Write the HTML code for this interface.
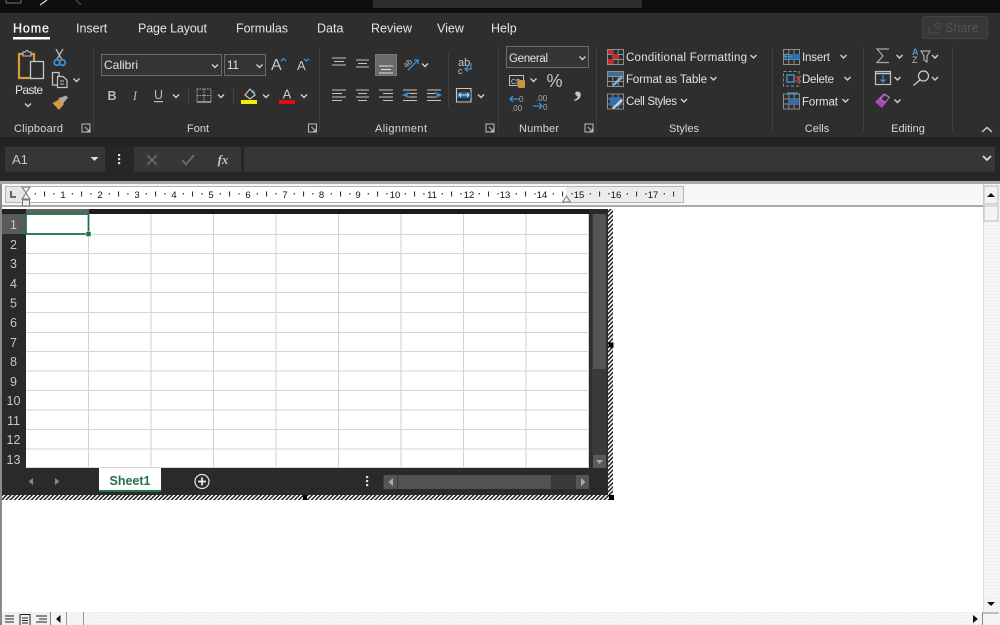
<!DOCTYPE html>
<html><head><meta charset="utf-8"><title>Excel</title>
<style>
html,body{margin:0;padding:0;width:1000px;height:625px;overflow:hidden;background:#fff}
svg{display:block;font-family:"Liberation Sans",sans-serif;filter:blur(.35px)}
.t{fill:#e2e2e2;font-size:11.500px}
.l{fill:#d8d8d8;font-size:11px;text-anchor:middle}
.tab{fill:#e4e4e4;font-size:12.500px}
.rn{fill:#c8c8c8;font-size:12.500px;text-anchor:middle}
.rl{fill:#111;font-size:9.500px;text-anchor:middle}
.g{stroke:#c4c4c4;stroke-width:1.300;fill:none}
.b{stroke:#3d8fd0;stroke-width:1.300;fill:none}
.c{stroke:#c4c4c4;stroke-width:1.100;fill:none}
.d{stroke:#3d3d3d;stroke-width:1}
</style></head><body>
<svg width="1000" height="625" viewBox="0 0 1000 625" xmlns="http://www.w3.org/2000/svg">
<defs>
<pattern id="h" width="3" height="3" patternUnits="userSpaceOnUse" patternTransform="rotate(45)"><rect width="3" height="3" fill="#fff"/><rect width="1.500" height="3" fill="#222"/></pattern>
<pattern id="rt" x="26" y="186" width="37" height="17" patternUnits="userSpaceOnUse"><rect x="8.700" y="7" width="1.200" height="1.500" fill="#333"/><rect x="18" y="5.500" width="1.100" height="5" fill="#333"/><rect x="27.300" y="7" width="1.200" height="1.500" fill="#333"/></pattern>
<pattern id="di" width="3" height="3" patternUnits="userSpaceOnUse"><rect width="3" height="3" fill="#f6f6f6"/><rect width="1" height="1" fill="#e6e6e6"/></pattern>
<g id="cv"><path d="M-3 -1.500L0 1.500L3 -1.500" fill="none" stroke="#d0d0d0" stroke-width="1.400"/></g>
<g id="lc"><path d="M-4 -4H4V4H-4Z M-1 -1L3.500 3.500M3.500 0.500V3.500H0.500" fill="none" stroke="#bdbdbd" stroke-width="1"/></g>
<g id="grid"><path d="M0 0H16V15H0ZM0 5H16M0 10H16M5.300 0V15M10.600 0V15" fill="none" stroke="#8f8f8f" stroke-width="1"/></g>
</defs>

<!-- title bar -->
<rect width="1000" height="13" fill="#0e0e0e"/>
<rect x="373" y="0" width="269" height="8" fill="#2e2e2e"/>
<path d="M6 3V0M21 3V0M6 3H21" stroke="#777" fill="none"/>
<path d="M40 5L47 0" stroke="#ddd" stroke-width="1.200"/>
<path d="M76 0L81 5" stroke="#555" stroke-width="1.200"/>

<!-- ribbon -->
<rect y="13" width="1000" height="124" fill="#2e2e2e"/>
<rect y="137" width="1000" height="44" fill="#262626"/>
<rect y="137" width="1000" height="9" fill="#232323"/>

<!-- tabs -->
<text x="13" y="32.500" class="tab" textLength="36" style="fill:#f6f6f6;stroke:#f6f6f6;stroke-width:.3">Home</text>
<rect x="13" y="37" width="37" height="2.500" fill="#fff"/>
<text x="76" y="32.500" class="tab">Insert</text>
<text x="138" y="32.500" class="tab" textLength="69">Page Layout</text>
<text x="236" y="32.500" class="tab" textLength="52">Formulas</text>
<text x="317" y="32.500" class="tab">Data</text>
<text x="371" y="32.500" class="tab">Review</text>
<text x="437" y="32.500" class="tab">View</text>
<text x="491" y="32.500" class="tab">Help</text>
<rect x="922.500" y="16.500" width="65" height="22" rx="2" fill="#383838" stroke="#444"/>
<path d="M934 25L938 22V24H942V27H938V29Z M929 27V33H941" fill="none" stroke="#4c4c4c"/>
<text x="945" y="32" style="font-size:12.500px;fill:#535353">Share</text>

<!-- dividers -->
<g class="d">
<path d="M93.500 48V132M319.500 48V132M498.500 46V132M596.500 46V132M772.500 48V132M863.500 46V132M952.500 46V132M448.500 52V108"/>
<path d="M188.500 88V104M233.500 88V104" stroke="#444"/>
</g>

<!-- clipboard -->
<path d="M19 54H34V78H19Z" fill="none" stroke="#d89a3c" stroke-width="2.200"/>
<path d="M23 56V52H25.500Q27 48.500 28.500 52H31V56Z" fill="#2e2e2e" stroke="#c4c4c4"/>
<rect x="30.500" y="61.500" width="13" height="17" fill="#2e2e2e" stroke="#c8c8c8" stroke-width="1.300"/>
<text x="15" y="94" class="t" textLength="28" style="font-size:12px">Paste</text>
<use href="#cv" x="28" y="105"/>
<path d="M56 49L61.500 59M63 49L57 59" stroke="#b5b5b5" stroke-width="1.300"/>
<circle cx="57" cy="62.500" r="2.800" fill="none" stroke="#3d8fd0" stroke-width="1.800"/>
<circle cx="62.500" cy="62.500" r="2.800" fill="none" stroke="#3d8fd0" stroke-width="1.800"/>
<path d="M52.500 72.500H59V85H52.500Z" class="g"/>
<path d="M57.500 76.500H63L67 80V87.500H57.500Z" fill="#2e2e2e" stroke="#c4c4c4" stroke-width="1.200"/>
<path d="M60 81H64M60 84H64" stroke="#c4c4c4"/>
<use href="#cv" x="76.500" y="80"/>
<path d="M52.500 103L60 99L64 104L59 110Z" fill="#d89a3c"/>
<path d="M58 98.500L66 95.500L68 97.500L63 103.500Z" fill="#a8a8a8"/>

<!-- font -->
<rect x="101.500" y="54.500" width="120" height="21" fill="#343434" stroke="#6a6a6a"/>
<text x="104" y="69" class="t" style="font-size:12px" textLength="34">Calibri</text>
<use href="#cv" x="215" y="66"/>
<rect x="224.500" y="54.500" width="41" height="21" fill="#343434" stroke="#6a6a6a"/>
<text x="227" y="69" class="t">11</text>
<use href="#cv" x="259.500" y="66"/>
<text x="271" y="70" style="font-size:16px;fill:#c8c8c8">A</text>
<path d="M281 61L283.500 58.500L286 61" class="b"/>
<text x="297" y="70" style="font-size:13px;fill:#c8c8c8">A</text>
<path d="M304 59L306.500 61L309 59" class="b"/>
<text x="112" y="100" text-anchor="middle" style="font-size:12.500px;font-weight:bold;fill:#b8b8b8">B</text>
<text x="135" y="100" text-anchor="middle" style="font-size:12.500px;font-style:italic;font-family:'Liberation Serif',serif;fill:#b8b8b8">I</text>
<text x="158.500" y="99" text-anchor="middle" style="font-size:12.500px;fill:#b8b8b8">U</text>
<rect x="154" y="101" width="9" height="1.200" fill="#b8b8b8"/>
<use href="#cv" x="176" y="96"/>
<path d="M197 89H211V102H197ZM204 89V102M197 95.500H211" fill="none" stroke="#a8a8a8" stroke-dasharray="1.500 1"/>
<path d="M197 102H211" stroke="#bbb" stroke-width="1.300"/>
<use href="#cv" x="221" y="96"/>
<path d="M245 95L250 89L255 95L250 99Z" fill="none" stroke="#c4c4c4" stroke-width="1.200"/>
<path d="M253 90L255 94" stroke="#3d8fd0" stroke-width="1.500"/>
<rect x="241" y="100" width="16" height="4" fill="#f2ec00"/>
<use href="#cv" x="266" y="96"/>
<text x="287" y="98.500" text-anchor="middle" style="font-size:13px;fill:#c8c8c8">A</text>
<rect x="279" y="100" width="16" height="4" fill="#e00b14"/>
<use href="#cv" x="304" y="96"/>

<!-- alignment -->
<rect x="375.500" y="54.500" width="21" height="21" fill="#6a6a6a" stroke="#7a7a7a"/>
<g class="c">
<path d="M332 58H346M334 61.500H344M332 65H346"/>
<path d="M356 60H369M358 63.500H367M356 67H369"/>
<path d="M379 66H393M381 69.500H391M379 73H393" stroke="#e0e0e0"/>
<path d="M332 90H346M332 93.500H342M332 97H346M332 100.500H342"/>
<path d="M356 90H369M358 93.500H367M356 97H369M358 100.500H367"/>
<path d="M379 90H393M383 93.500H393M379 97H393M383 100.500H393"/>
<path d="M403 90H417M409 93.500H417M409 97H417M403 100.500H417"/>
<path d="M427 90H441M427 93.500H435M427 97H435M427 100.500H441"/>
</g>
<path d="M409 97L403.500 94.500L409 92M404 94.500H408" class="b" transform="translate(0,.5)"/>
<path d="M435 97L440.500 94.500L435 92M436 94.500H440" class="b" transform="translate(0,.5)"/>
<text x="403" y="66" style="font-size:8px;fill:#bbb" transform="rotate(-35 407 63)">ab</text>
<path d="M408 70L418 60M414 60H418V64" class="b"/>
<use href="#cv" x="425" y="65"/>
<text x="458" y="66" style="font-size:11px;fill:#c4c4c4">ab</text>
<text x="458" y="74" style="font-size:9px;fill:#c4c4c4">c</text>
<path d="M471 63V69H465M468 66.500L465 69L468 71.500" class="b"/>
<path d="M456.500 88.500H471V102H456.500Z" class="c"/>
<path d="M457 92H471V98H457Z" fill="#27608f"/>
<path d="M459 95H469M461 93L459 95L461 97M467 93L469 95L467 97" fill="none" stroke="#dde" stroke-width="1"/>
<use href="#cv" x="481" y="96"/>

<!-- number -->
<rect x="506.500" y="46.500" width="82" height="21" fill="#343434" stroke="#6a6a6a"/>
<text x="509" y="62" class="t" textLength="39">General</text>
<use href="#cv" x="582.500" y="58"/>
<rect x="509.500" y="75.500" width="14" height="10" fill="none" stroke="#c0c0c0"/>
<text x="511" y="84" style="font-size:7px;fill:#ccc">C$</text>
<rect x="518" y="80" width="7" height="8" rx="1" fill="#c9973f"/>
<use href="#cv" x="533.500" y="80"/>
<text x="554.500" y="87" text-anchor="middle" style="font-size:18px;fill:#c4c4c4">%</text>
<text x="578" y="96" text-anchor="middle" style="font-size:32px;font-weight:bold;fill:#c8c8c8;font-family:'Liberation Serif',serif">,</text>
<path d="M519 99H510M513 96L510 99L513 102" class="b"/>
<text x="519" y="102" style="font-size:8px;fill:#aaa">0</text>
<text x="511" y="111" style="font-size:8px;fill:#aaa">.00</text>
<text x="536" y="101" style="font-size:8px;fill:#aaa">.00</text>
<path d="M533 106H542M539 103L542 106L539 109" class="b"/>
<text x="543" y="110" style="font-size:8px;fill:#aaa">0</text>

<!-- styles -->
<use href="#grid" x="607.500" y="49.500"/>
<path d="M608 50H613V54H608ZM612.500 54H618V59H612.500ZM608 59H613V64H608Z" fill="#c62a2a"/>
<text x="626" y="61" class="t" textLength="121">Conditional Formatting</text>
<use href="#cv" x="753.500" y="56.500"/>
<use href="#grid" x="607.500" y="71.500"/>
<path d="M608 72H623V76H608Z" fill="#3d6f9c"/>
<path d="M612 85L621 76L623 78L614 86Z" fill="#7fb5e0"/>
<text x="626" y="83" class="t" textLength="81">Format as Table</text>
<use href="#cv" x="713.500" y="78.500"/>
<use href="#grid" x="607.500" y="94"/>
<path d="M610 97H621V106H610Z" fill="#2a72b5"/>
<path d="M612 108L621 99L623 101L614 109Z" fill="#cfcfcf"/>
<text x="626" y="105" class="t" textLength="51">Cell Styles</text>
<use href="#cv" x="684" y="100.500"/>

<!-- cells -->
<use href="#grid" x="783.500" y="49.500"/>
<rect x="789" y="54" width="11" height="5.500" fill="#2a72b5"/>
<path d="M792 56.500H784M787 53.500L784 56.500L787 59.500" class="b"/>
<text x="802" y="61" class="t" textLength="28">Insert</text>
<use href="#cv" x="843.500" y="56.500"/>
<path d="M783.500 71.500H799V86H783.500Z" fill="none" stroke="#8f8f8f" stroke-dasharray="3 2"/>
<rect x="787" y="75" width="7" height="7" fill="#2e2e2e" stroke="#3d8fd0" stroke-width="1.500"/>
<path d="M796 76L801 82M801 76L796 82" stroke="#d23a3a" stroke-width="1.500"/>
<text x="802" y="83" class="t" textLength="32">Delete</text>
<use href="#cv" x="847.500" y="78.500"/>
<use href="#grid" x="783.500" y="94"/>
<rect x="788.500" y="99" width="10" height="5" fill="#2a72b5"/>
<path d="M787 93H798" class="b"/>
<text x="802" y="105.500" class="t" textLength="36">Format</text>
<use href="#cv" x="845.500" y="100.500"/>

<!-- editing -->
<path d="M889 49H877L883 56L877 62.500H889" fill="none" stroke="#a8a8a8" stroke-width="1.200"/>
<use href="#cv" x="899.500" y="56.500"/>
<text x="912" y="55" style="font-size:9px;font-weight:bold;fill:#4a9ad8">A</text>
<text x="912" y="63" style="font-size:9px;fill:#bbb">Z</text>
<path d="M921 51H930L927 56V62L924 60V56Z" fill="none" stroke="#c4c4c4"/>
<use href="#cv" x="935" y="56.500"/>
<rect x="875.500" y="71.500" width="15" height="13" fill="none" stroke="#c0c0c0" stroke-width="1.200"/>
<path d="M875.500 73.500H890.500" stroke="#c0c0c0" stroke-width="1.500"/>
<path d="M883 75V82M880.500 79.500L883 82L885.500 79.500" class="b"/>
<use href="#cv" x="897.500" y="78.500"/>
<circle cx="923.500" cy="76" r="5" fill="none" stroke="#cfcfcf" stroke-width="1.200"/>
<path d="M920 80L913.500 85.500" stroke="#cfcfcf" stroke-width="1.300"/>
<use href="#cv" x="935" y="78.500"/>
<path d="M875 102L884 93L890 97L882 108Z" fill="#a44fb0"/>
<path d="M885 94.500L889.500 97.500L885 102.500L880.500 98.500Z" fill="#3a2b3c" stroke="#c78fd0" stroke-width=".8"/>
<use href="#cv" x="897.500" y="101"/>

<!-- group labels -->
<text x="38.500" y="132" class="l" textLength="49">Clipboard</text><use href="#lc" x="86" y="128"/>
<text x="198" y="132" class="l">Font</text><use href="#lc" x="312.500" y="128"/>
<text x="401" y="132" class="l" textLength="52">Alignment</text><use href="#lc" x="490" y="128"/>
<text x="539" y="132" class="l" textLength="40">Number</text><use href="#lc" x="589" y="128"/>
<text x="684" y="132" class="l">Styles</text>
<text x="817" y="132" class="l">Cells</text>
<text x="908" y="132" class="l">Editing</text>
<path d="M982 132L987 127.500L992 132" fill="none" stroke="#cfcfcf" stroke-width="1.400"/>

<!-- formula bar -->
<rect x="5" y="147" width="100" height="25" fill="#363636"/>
<text x="12" y="164" style="font-size:13px;fill:#c8c8c8">A1</text>
<path d="M90.500 157H98.500L94.500 161Z" fill="#e0e0e0"/>
<rect x="118" y="154" width="2.200" height="2.200" fill="#ddd"/><rect x="118" y="158" width="2.200" height="2.200" fill="#ddd"/><rect x="118" y="162" width="2.200" height="2.200" fill="#ddd"/>
<rect x="134" y="147" width="107" height="25" fill="#363636"/>
<path d="M147 155L157 165M157 155L147 165" stroke="#6a6a6a" stroke-width="1.600"/>
<path d="M182 160L186 164.500L194 155" fill="none" stroke="#6a6a6a" stroke-width="1.800"/>
<text x="223" y="164" text-anchor="middle" style="font-size:13px;font-style:italic;font-weight:bold;font-family:'Liberation Serif',serif;fill:#c4c4c4">fx</text>
<rect x="244" y="147" width="751" height="25" fill="#363636"/>
<path d="M983 156L987 160L991 156" fill="none" stroke="#e0e0e0" stroke-width="1.800"/>

<!-- document area -->
<rect x="0" y="181" width="1000" height="3" fill="#a8a8a8"/>
<rect x="0" y="184" width="983" height="21" fill="#f7f7f7"/>
<rect x="0" y="205" width="983" height="2" fill="#ababab"/>
<rect x="0" y="184" width="2" height="441" fill="#8a8a8a"/>

<!-- ruler -->
<rect x="5.500" y="186.500" width="678" height="16" fill="#ececec" stroke="#b5b5b5"/>
<rect x="25" y="187" width="541" height="15" fill="#fff"/>
<rect x="6" y="187" width="19" height="15" fill="#e6e6e6"/>
<path d="M11 191V197H16" fill="none" stroke="#444" stroke-width="1.600"/>
<rect x="26" y="187" width="654" height="15" fill="url(#rt)"/>
<g class="rl">
<text x="63" y="198">1</text><text x="100" y="198">2</text><text x="137" y="198">3</text><text x="174" y="198">4</text><text x="211" y="198">5</text><text x="248" y="198">6</text><text x="285" y="198">7</text><text x="321.500" y="198">8</text><text x="358" y="198">9</text><text x="395" y="198">10</text><text x="432" y="198">11</text><text x="469" y="198">12</text><text x="505" y="198">13</text><text x="542" y="198">14</text><text x="579" y="198">15</text><text x="616" y="198">16</text><text x="653" y="198">17</text>
</g>
<path d="M22 187H30L26 193ZM22 199L26 193L30 199Z" fill="#eee" stroke="#777"/>
<rect x="22.500" y="200" width="7" height="6" fill="#eee" stroke="#777"/>
<path d="M562.500 202L566.500 196L570.500 202Z" fill="#eee" stroke="#777"/>

<!-- sheet object -->
<rect x="2" y="209" width="606" height="286" fill="#2a2a2a"/>
<rect x="2" y="209" width="24" height="5" fill="#222"/>
<rect x="26" y="209" width="564" height="5" fill="#1c1c1c"/>
<rect x="26" y="209" width="63" height="5" fill="#5c6660"/>
<rect x="26" y="214" width="563" height="254" fill="#fff"/>
<!-- grid -->
<path d="M88.500 214V468M151 214V468M213.500 214V468M276 214V468M338.500 214V468M401 214V468M463.500 214V468M526 214V468M588.500 214V468" stroke="#d2d2d2" stroke-width="1" fill="none"/>
<path d="M26 234.500H589M26 253.500H589M26 273.500H589M26 292.500H589M26 312.500H589M26 332.500H589M26 351.500H589M26 371H589M26 390.500H589M26 410H589M26 429.500H589M26 449H589M26 467.500H589" stroke="#d6d6d6" stroke-width="1" fill="none"/>
<!-- row headers -->
<rect x="2" y="214" width="24" height="254" fill="#2a2a2a"/>
<rect x="2" y="214" width="24" height="20" fill="#5a5a5a"/>
<g class="rn">
<text x="13.500" y="229">1</text><text x="13.500" y="249">2</text><text x="13.500" y="268">3</text><text x="13.500" y="288">4</text><text x="13.500" y="307.500">5</text><text x="13.500" y="327">6</text><text x="13.500" y="347">7</text><text x="13.500" y="366">8</text><text x="13.500" y="386">9</text><text x="13.500" y="405">10</text><text x="13.500" y="425">11</text><text x="13.500" y="444">12</text><text x="13.500" y="464">13</text>
</g>
<!-- selection -->
<rect x="26" y="214" width="62.500" height="20" fill="none" stroke="#217346" stroke-width="1.800"/>
<rect x="86" y="231.500" width="5" height="5" fill="#217346" stroke="#fff" stroke-width=".5"/>
<!-- v scrollbar -->
<rect x="590" y="214" width="18" height="254" fill="#2f2f2f"/>
<rect x="592" y="214" width="14" height="241" fill="#3a3a3a"/>
<rect x="593" y="214" width="13" height="155" fill="#555"/>
<rect x="593" y="455" width="13" height="13" fill="#5a5a5a"/>
<path d="M596 460H603L599.500 464Z" fill="#aaa"/>
<!-- tabs -->
<rect x="2" y="468" width="606" height="27" fill="#2a2a2a"/>
<path d="M33 478V485L28.500 481.500Z" fill="#888"/>
<path d="M55 478V485L59.500 481.500Z" fill="#888"/>
<rect x="99" y="468" width="62" height="23" fill="#fff"/>
<rect x="99" y="490" width="62" height="2" fill="#217346"/>
<text x="130" y="485" text-anchor="middle" style="font-size:12.500px;font-weight:bold;fill:#217346">Sheet1</text>
<circle cx="202" cy="481.500" r="7" fill="none" stroke="#ddd" stroke-width="1.300"/>
<path d="M198 481.500H206M202 477.500V485.500" stroke="#eee" stroke-width="1.800"/>
<rect x="366" y="476" width="2.200" height="2.200" fill="#ddd"/><rect x="366" y="480" width="2.200" height="2.200" fill="#ddd"/><rect x="366" y="484" width="2.200" height="2.200" fill="#ddd"/>
<rect x="383" y="475" width="206" height="14" fill="#3a3a3a"/>
<rect x="398" y="475" width="153" height="14" fill="#525252"/>
<rect x="384" y="475" width="13" height="14" fill="#555"/>
<rect x="576" y="475" width="13" height="14" fill="#555"/>
<path d="M393 478V486L388.500 482Z" fill="#aaa"/>
<path d="M581 478V486L585.500 482Z" fill="#aaa"/>
<!-- hatch -->
<rect x="608" y="209" width="5" height="291" fill="url(#h)"/>
<rect x="2" y="495" width="611" height="5" fill="url(#h)"/>
<rect x="608.500" y="342.500" width="5" height="5" fill="#000"/>
<rect x="303" y="495" width="4" height="5" fill="#000"/>
<rect x="609" y="495" width="5" height="5" fill="#000"/>

<!-- page scrollbars -->
<rect x="983" y="184" width="17" height="428" fill="url(#di)"/>
<rect x="983" y="184" width="1" height="428" fill="#d8d8d8"/>
<rect x="984" y="186" width="14" height="18" fill="#f2f2f2" stroke="#bbb"/>
<path d="M987 197H995L991 193Z" fill="#111"/>
<rect x="984" y="206" width="14" height="15" fill="#f4f4f4" stroke="#bbb"/>
<rect x="984" y="597" width="14" height="15" fill="#f2f2f2"/>
<path d="M987 602H995L991 606Z" fill="#111"/>
<rect x="2" y="612" width="981" height="13" fill="url(#di)"/>
<rect x="2" y="612" width="48" height="13" fill="#f0f0f0"/>
<path d="M50.500 612V625" stroke="#888"/>
<path d="M5 616H14M5 619H14M5 622H14M20 614.500H30V625M20 614.500V625M22 618H28M22 620.500H28M22 623H28M36 616H47M39 619H47M36 622H47" stroke="#222" fill="none"/>
<path d="M60.500 615V623L56 619Z" fill="#111"/>
<rect x="67" y="612" width="16" height="13" fill="#f4f4f4"/>
<path d="M66.500 612V625M83.500 612V625" stroke="#999"/>
<path d="M973 615V623L978 619Z" fill="#111"/>
<rect x="983" y="612" width="17" height="13" fill="#f4f4f4"/>
<path d="M982.500 625V613H999" stroke="#888" fill="none"/>
</svg>
</body></html>
